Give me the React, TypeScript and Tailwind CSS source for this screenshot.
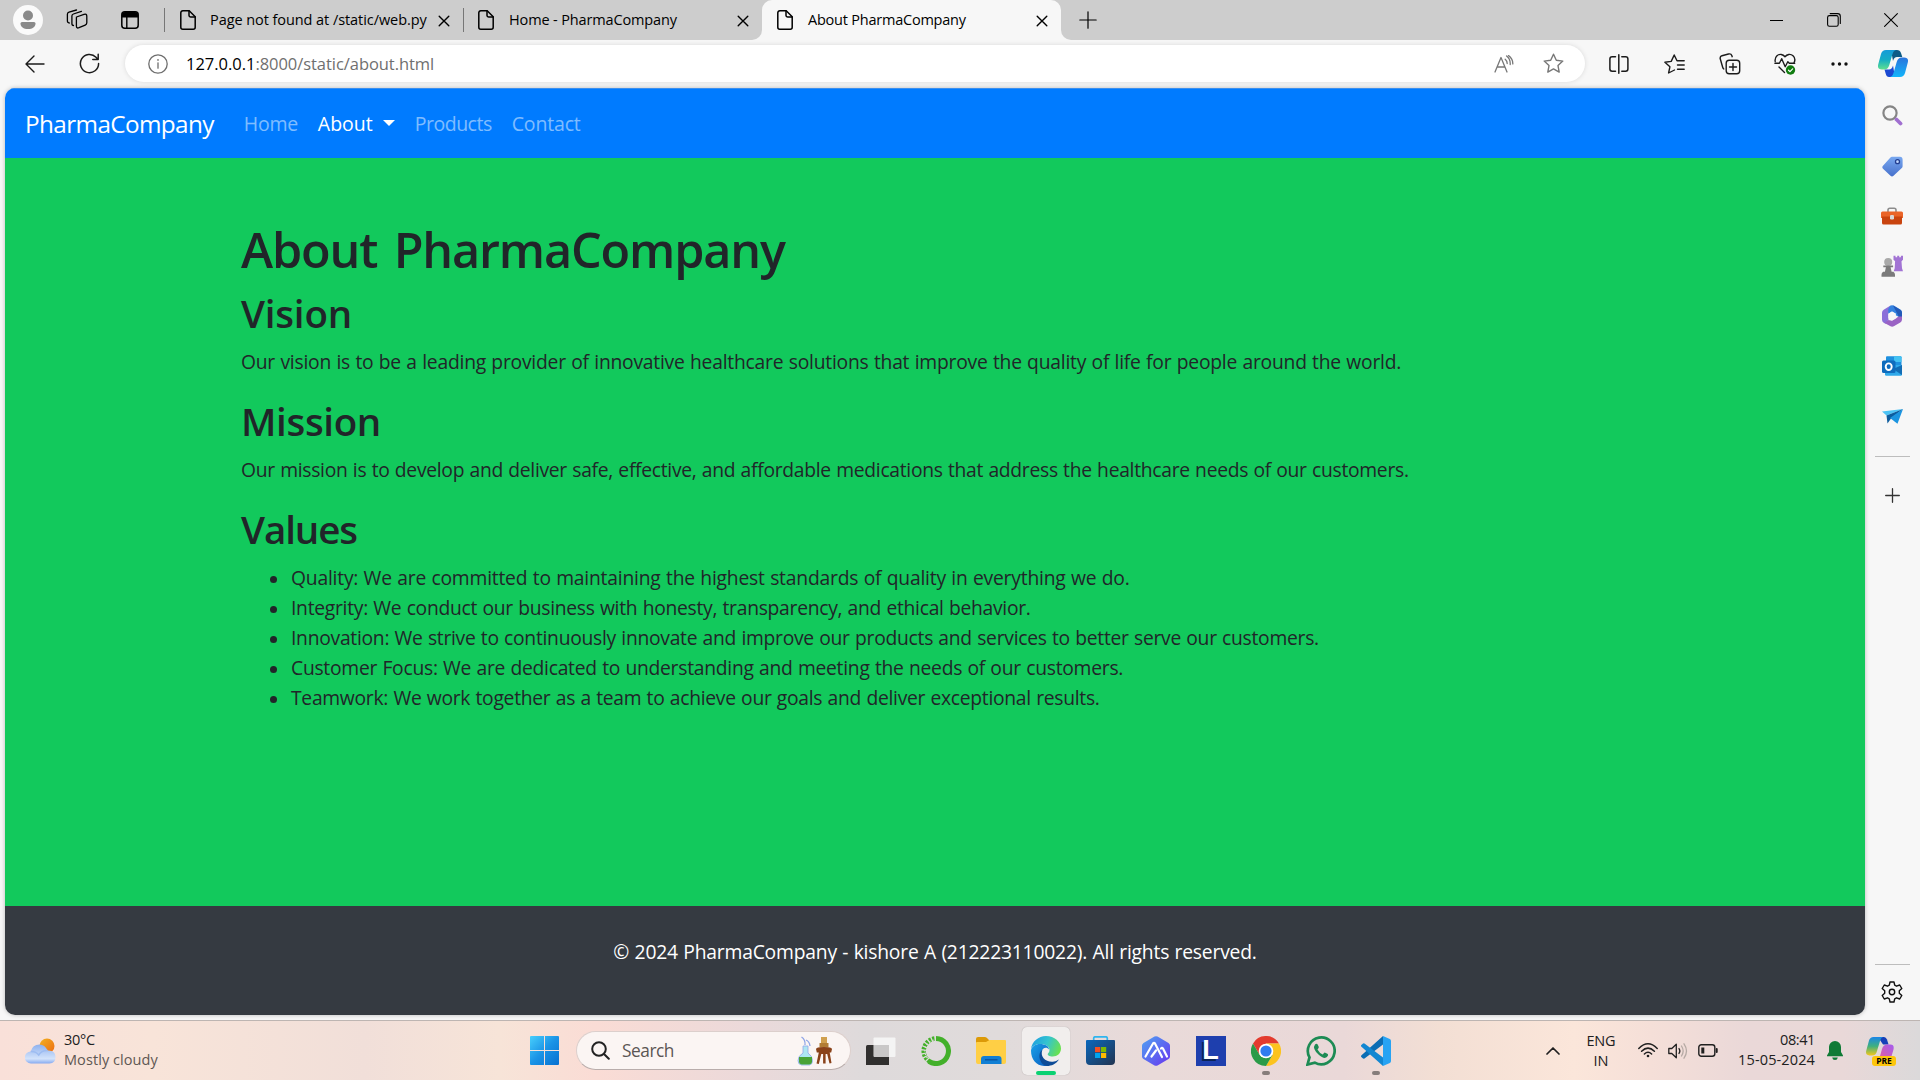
import { useLayoutEffect, useRef, useState } from "react";
import type { ReactNode } from "react";

/** Single line of text whose tracking is adjusted so that it spans `w` pixels. */
function Fit({ w, className = "", children }: { w: number; className?: string; children: string }) {
  const ref = useRef<HTMLSpanElement>(null);
  const [spacing, setSpacing] = useState(0.01);
  useLayoutEffect(() => {
    const el = ref.current;
    if (!el) return;
    const previous = el.style.letterSpacing;
    el.style.letterSpacing = "0.01px";
    const natural = el.getBoundingClientRect().width;
    el.style.letterSpacing = previous;
    setSpacing((w - natural) / children.length);
  }, [w, children]);
  return (
    <span ref={ref} className={`inline-block w-max shrink-0 whitespace-nowrap ${className}`} style={{ letterSpacing: `${spacing}px` }}>
      {children}
    </span>
  );
}

function Slot({ className, children }: { className: string; children?: ReactNode }) {
  return <div className={`flex shrink-0 items-center justify-center ${className}`}>{children}</div>;
}

const line = { fill: "none", stroke: "currentColor", strokeLinecap: "round", strokeLinejoin: "round" } as const;

function FileIcon() {
  return (
    <svg width="16" height="20" viewBox="0 0 16 20" {...line} strokeWidth="1.5">
      <path d="M2.8.8h6.4l6 6v10.400a2 2 0 0 1-2 2H2.800a2 2 0 0 1-2-2V2.800a2 2 0 0 1 2-2z" />
      <path d="M9 .9v4.300a1.800 1.800 0 0 0 1.800 1.800h4.300" />
    </svg>
  );
}

function CloseIcon() {
  return (
    <svg width="12" height="12" viewBox="0 0 12 12" {...line} strokeWidth="1.400">
      <path d="M1.200 1.200l9.600 9.600M10.800 1.200l-9.600 9.600" />
    </svg>
  );
}

function TabStrip() {
  return (
    <header className="flex h-10 items-center bg-[#cdcdcd] text-black">
      <Slot className="w-14">
        <svg width="30" height="30" viewBox="0 0 30 30">
          <circle cx="15" cy="15" r="15" fill="#fafafa" />
          <circle cx="15" cy="10.500" r="5" fill="#8a8a8a" />
          <path d="M7.500 18.500q0-1.500 1.500-1.500h12q1.500 0 1.500 1.500c0 3.500-3 5.500-7.500 5.500s-7.500-2-7.500-5.500z" fill="#8a8a8a" />
        </svg>
      </Slot>
      <Slot className="w-[42px]">
        <svg width="22" height="22" viewBox="0 0 22 22" {...line} strokeWidth="1.300">
          <path d="M10.500 8l7.500-2.600q2.800-.9 2.800 1.800v6.600q0 1.600-1.600 2.300l-6.200 2.600q-2.600 1-2.600-1.600V9.400q0-1 .1-1.400z" />
          <path d="M7.500 16.500q-1.600 0-1.600-2V7q0-1.500 1.500-2l8-2.700" />
          <path d="M3.300 14q-1.900 0-1.900-2.200V5.300q0-1.700 1.600-2.200L10.500 1" />
        </svg>
      </Slot>
      <Slot className="w-[63px]">
        <svg width="18" height="18" viewBox="0 0 18 18">
          <rect x=".8" y=".8" width="16.400" height="16.400" rx="3" fill="none" stroke="#000" strokeWidth="1.500" />
          <path d="M1 6.500V4q0-3 3-3h10q3 0 3 3v2.500z" />
          <path d="M5.800 6v11" stroke="#000" strokeWidth="1.400" />
        </svg>
      </Slot>
      <div className="ml-[3px] flex h-10 w-[299px] items-center">
        <div className="h-6 w-px bg-[#777]" />
        <div className="ml-[15px] flex">
          <FileIcon />
        </div>
        <div className="ml-[14px] w-[217px] text-[14.500px]">
          <Fit w={217}>Page not found at /static/web.py</Fit>
        </div>
        <div className="ml-[11px] pt-px">
          <CloseIcon />
        </div>
      </div>
      <div className="flex h-10 w-[299px] items-center">
        <div className="h-6 w-px bg-[#777]" />
        <div className="ml-[14px] flex">
          <FileIcon />
        </div>
        <div className="ml-[15px] w-[228px] text-[14.500px]">
          <Fit w={168}>Home - PharmaCompany</Fit>
        </div>
        <div className="pt-px">
          <CloseIcon />
        </div>
      </div>
      <div className="-ml-[10px] flex h-10 w-[319px]">
        <div className="w-[10px] bg-[#f7f7f7]">
          <div className="h-10 rounded-br-[10px] bg-[#cdcdcd]" />
        </div>
        <div className="flex w-[299px] items-center rounded-t-[10px] bg-[#f7f7f7]">
          <div className="ml-[15px] flex">
            <FileIcon />
          </div>
          <div className="ml-[15px] w-[228px] text-[14.500px]">
            <Fit w={158}>About PharmaCompany</Fit>
          </div>
          <div className="pt-px">
            <CloseIcon />
          </div>
        </div>
        <div className="w-[10px] bg-[#f7f7f7]">
          <div className="h-10 rounded-bl-[10px] bg-[#cdcdcd]" />
        </div>
      </div>
      <Slot className="w-[34px]">
        <svg width="18" height="18" viewBox="0 0 18 18" {...line} strokeWidth="1.200">
          <path d="M9 .8v16.400M.8 9h16.400" />
        </svg>
      </Slot>
      <div className="ml-auto flex">
        <Slot className="w-[58px]">
          <svg width="13" height="13" viewBox="0 0 13 13">
            <path d="M0 6.500h13" stroke="#000" />
          </svg>
        </Slot>
        <Slot className="w-[57px]">
          <svg width="14" height="14" viewBox="0 0 14 14" {...line} strokeWidth="1.100">
            <rect x=".6" y="2.600" width="10.600" height="10.600" rx="1.800" />
            <path d="M3.200.6h7.400q2.700 0 2.700 2.700v7.200" />
          </svg>
        </Slot>
        <Slot className="w-[58px]">
          <svg width="14" height="14" viewBox="0 0 14 14" {...line} strokeWidth="1.100">
            <path d="M.6.6l12.800 12.800M13.400.6L.6 13.400" />
          </svg>
        </Slot>
      </div>
    </header>
  );
}

function CopilotIcon() {
  return (
    <svg width="30" height="27" viewBox="0 0 30 27">
      <defs>
        <linearGradient id="cpA" x1="0" y1="0" x2="0" y2="1">
          <stop offset="0" stopColor="#159bd8" />
          <stop offset=".5" stopColor="#15adc5" />
          <stop offset="1" stopColor="#5fe08f" />
        </linearGradient>
        <linearGradient id="cpB" x1="0" y1="0" x2="0" y2="1">
          <stop offset="0" stopColor="#2a74dc" />
          <stop offset="1" stopColor="#12b5fb" />
        </linearGradient>
      </defs>
      <path d="M13 0h6q3 0 4 3l1.300 4h-5.300q-3 0-4 4z" fill="#0d5b86" />
      <path d="M17 27h-6q-2.500 0-3.200-3L6.500 19.500H11q3 0 4-4z" fill="#1b49d2" />
      <path d="M8 0h10q-2.500.5-3.500 4l-3.200 11q-1.300 4.500-5 4.500H4q-5 0-3.800-5L3 4q1.200-4 5-4z" fill="url(#cpA)" />
      <path d="M22 27H12q2.500-.5 3.500-4l3.200-11q1.300-4.500 5-4.500H26q5 0 3.800 5L27 23q-1.200 4-5 4z" fill="url(#cpB)" />
    </svg>
  );
}

const star = "M10.500 1.200l2.800 6 6.500.9-4.800 4.500 1.200 6.500-5.700-3.200-5.700 3.200L6 12.600 1.200 8.100l6.500-.9z";

function Toolbar() {
  return (
    <div className="flex h-12 items-center bg-[#f7f7f7] pb-px text-[#1b1b1b]">
      <Slot className="w-[62px] pl-2">
        <svg width="20" height="18" viewBox="0 0 20 18" {...line} strokeWidth="1.400">
          <path d="M19 9H1.200M9 1L1 9l8 8" />
        </svg>
      </Slot>
      <Slot className="w-[55px]">
        <svg width="21" height="21" viewBox="0 0 21 21" {...line} strokeWidth="1.500">
          <path d="M19.600 10.500A9.100 9.100 0 1 1 17 4.200l1.800 2.200M19.200 1.200v5.400h-5.400" />
        </svg>
      </Slot>
      <div className="ml-2 flex h-[37px] w-[1460px] items-center rounded-full bg-white shadow-[0_0_5px_rgba(0,0,0,0.12)]">
        <Slot className="w-[61px] pl-1 text-[#6e6e6e]">
          <svg width="20" height="20" viewBox="0 0 20 20" {...line} strokeWidth="1.300">
            <circle cx="10" cy="10" r="9.200" />
            <path d="M10 8.800v5.400" />
            <path d="M10 5.900v.1" strokeWidth="1.700" />
          </svg>
        </Slot>
        <div className="flex w-[1293px] text-[16.500px] leading-6">
          <Fit w={69.500} className="text-black">127.0.0.1</Fit>
          <Fit w={179} className="text-[#6f6f6f]">:8000/static/about.html</Fit>
        </div>
        <Slot className="w-[50px] text-[#777]">
          <svg width="20" height="18" viewBox="0 0 20 18" {...line} strokeWidth="1.300">
            <path d="M1 17L7 2.500 13 17M3.200 12h7.700M11.200 4.200q2 1.600 2 4.300M12.600 1q4 3 3.600 8.500M14.500.6q4.500 3.500 4.300 8.300" />
          </svg>
        </Slot>
        <Slot className="w-[48px] text-[#777]">
          <svg width="21" height="21" viewBox="0 0 21 21" {...line} strokeWidth="1.400">
            <path d={star} />
          </svg>
        </Slot>
      </div>
      <Slot className="ml-[6px] w-[56px]">
        <svg width="20" height="20" viewBox="0 0 20 20" {...line} strokeWidth="1.500">
          <path d="M6.500 2.800H3.200Q.9 2.800.9 5v10q0 2.200 2.300 2.200h3.300M12.800 2.800h3.800q2.300 0 2.300 2.200v10q0 2.200-2.300 2.200h-3.800M9.800.8v18.400" />
        </svg>
      </Slot>
      <Slot className="w-[55px]">
        <svg width="21" height="20" viewBox="0 0 21 20" {...line} strokeWidth="1.400">
          <path d="M10.500 16l-5.900 3 1.300-6.200L.9 8.200l6.300-.8 3-6.400 2.800 5.800h7.200M13.500 11h6.700M13.500 15.200h6.700" />
        </svg>
      </Slot>
      <Slot className="w-[55px]">
        <svg width="22" height="22" viewBox="0 0 22 22" {...line} strokeWidth="1.400">
          <rect x="7.200" y="7.200" width="13.500" height="13.500" rx="3" />
          <path d="M14 10.500v7M10.500 14h7M4.800 16Q4 15.500 3.600 14L1.300 6Q.6 3.500 3 2.700L9.500 1q2.600-.6 3.400 1.700l.3 1" />
        </svg>
      </Slot>
      <Slot className="w-[55px]">
        <svg width="22" height="22" viewBox="0 0 22 22" {...line} strokeWidth="1.400">
          <path d="M1.200 8.500Q.6 5 3 2.800c2.500-2.300 6-1.600 8 1 2-2.600 5.500-3.300 8-1 2.200 2 2.200 4.700 1 7M.9 10.200h4.500l2.300-4.500 3.500 8 2.600-5 1.500 1.500h5.400M5 14l5.500 5.500" />
          <circle cx="16.500" cy="17" r="4.700" fill="#107c10" stroke="none" />
          <path d="M14.500 17.200l1.500 1.400 2.600-2.800" stroke="#fff" strokeWidth="1.200" />
        </svg>
      </Slot>
      <Slot className="w-[55px]">
        <svg width="17" height="4" viewBox="0 0 17 4" fill="#111">
          <circle cx="2" cy="2" r="1.700" />
          <circle cx="8.500" cy="2" r="1.700" />
          <circle cx="15" cy="2" r="1.700" />
        </svg>
      </Slot>
      <Slot className="w-[52px]">
        <CopilotIcon />
      </Slot>
    </div>
  );
}

function SiteNav() {
  return (
    <nav className="flex h-[70px] items-center border-t border-[#3b8fee] bg-[#007bff] pt-px pl-5 text-[19.500px] leading-[30px] text-white/50">
      <Fit w={189} className="text-[24.300px] text-white">PharmaCompany</Fit>
      <Fit w={54} className="ml-[30px]">Home</Fit>
      <Fit w={55} className="ml-5 text-white">About</Fit>
      <div className="mt-[-2px] ml-[10px] border-x-[6px] border-t-[6px] border-x-transparent border-t-white" />
      <Fit w={77} className="ml-5">Products</Fit>
      <Fit w={69} className="ml-5">Contact</Fit>
    </nav>
  );
}

const values: [string, number][] = [
  ["Quality: We are committed to maintaining the highest standards of quality in everything we do.", 839.500],
  ["Integrity: We conduct our business with honesty, transparency, and ethical behavior.", 740.500],
  ["Innovation: We strive to continuously innovate and improve our products and services to better serve our customers.", 1029],
  ["Customer Focus: We are dedicated to understanding and meeting the needs of our customers.", 833],
  ["Teamwork: We work together as a team to achieve our goals and deliver exceptional results.", 809.500],
];

function Heading({ w, children }: { w: number; children: string }) {
  return (
    <h2 className="mb-[10px] flex h-12 pt-px text-[38.500px] leading-[48px] font-semibold">
      <Fit w={w}>{children}</Fit>
    </h2>
  );
}

function SitePage() {
  return (
    <main className="flex h-[927px] w-[1860px] shrink-0 flex-col overflow-hidden rounded-[10px] shadow-[0_0_4px_rgba(0,0,0,0.25)]">
      <SiteNav />
      <section className="h-[748px] bg-[#12c95c] pt-[60px] pl-[236px] text-[19.300px] leading-[30px] text-[#212529] [word-spacing:0.600px]">
        <h1 className="mb-[10px] flex h-[60px] pt-px text-[48.500px] leading-[60px] font-semibold [word-spacing:5px]">
          <Fit w={544}>About PharmaCompany</Fit>
        </h1>
        <Heading w={111}>Vision</Heading>
        <p className="mb-5 flex h-[30px] pt-px">
          <Fit w={1161.500}>Our vision is to be a leading provider of innovative healthcare solutions that improve the quality of life for people around the world.</Fit>
        </p>
        <Heading w={140}>Mission</Heading>
        <p className="mb-5 flex h-[30px] pt-px">
          <Fit w={1169}>Our mission is to develop and deliver safe, effective, and affordable medications that address the healthcare needs of our customers.</Fit>
        </p>
        <Heading w={116}>Values</Heading>
        <ul className="pt-px pl-[29px]">
          {values.map(([text, w]) => (
            <li key={text} className="flex h-[30px] items-center">
              <span className="mt-0.5 mr-[14px] size-[7px] rounded-full bg-[#212529]" />
              <Fit w={w}>{text}</Fit>
            </li>
          ))}
        </ul>
      </section>
      <footer className="flex h-[109px] justify-center bg-[#353a41] pt-[31px] text-[19.300px] leading-[30px] text-white [word-spacing:0.600px]">
        <Fit w={644}>© 2024 PharmaCompany - kishore A (212223110022). All rights reserved.</Fit>
      </footer>
    </main>
  );
}

function Sidebar() {
  return (
    <aside className="flex w-[55px] flex-col items-center pr-px">
      <Slot className="mt-[2px] h-[50px]">
        <svg width="21" height="21" viewBox="0 0 21 21" fill="none">
          <circle cx="8" cy="8" r="6.600" stroke="#858585" strokeWidth="2.200" />
          <path d="M14.500 14.500l4 4" stroke="#a06fd0" strokeWidth="3.800" strokeLinecap="round" />
        </svg>
      </Slot>
      <Slot className="h-[51px] pt-px">
        <svg width="21" height="21" viewBox="0 0 21 21">
          <defs>
            <linearGradient id="tag" x1="0" y1="0" x2="0" y2="1">
              <stop offset="0" stopColor="#79a8f0" />
              <stop offset="1" stopColor="#4771cc" />
            </linearGradient>
          </defs>
          <path d="M10 .8h8q2.600.2 2.600 3v6.500q0 1-.8 1.800l-8.300 7.700q-1.500 1.200-3 0L1 12.800q-1.400-1.500 0-3l7.200-8Q9 .8 10 .8z" fill="url(#tag)" />
          <circle cx="15.500" cy="5.700" r="2" fill="#bfd7ff" stroke="#243f91" strokeWidth="1.300" />
        </svg>
      </Slot>
      <Slot className="h-[49px] pt-px">
        <svg width="22" height="18" viewBox="0 0 22 18">
          <path d="M7 5V3q0-1.800 1.800-1.800h4.400Q15 1.200 15 3v2" fill="none" stroke="#8c8c8c" strokeWidth="1.600" />
          <path d="M0 6q0-1.500 1.500-1.500h19Q22 4.500 22 6v5H0z" fill="#ea6428" />
          <path d="M1 9.500h20V16q0 1.500-1.500 1.500h-17Q1 17.500 1 16z" fill="#c9440f" />
          <rect x="9" y="8" width="4" height="4.500" rx="1.200" fill="#d8d8d8" />
        </svg>
      </Slot>
      <Slot className="h-[51px] pt-[2px]">
        <svg width="22" height="23" viewBox="0 0 22 23">
          <path d="M12.500.7h2v1.500h1.700V.7h2v1.500h1.700V.7H22v4l-1.500 1.500.5 7 1 3H12.700l1-3 .4-7-1.600-1.500z" fill="#a274d4" />
          <circle cx="7.200" cy="7" r="4" fill="#a9a9a9" />
          <path d="M2.300 10.500h9.800v1.800H9.600l1 4.500h1.700q1.700 1.200 1.700 3v2H.5v-2q0-2 1.700-3h1.700l1-4.500H2.300z" fill="#7b7b7b" />
        </svg>
      </Slot>
      <Slot className="h-[50px]">
        <svg width="20" height="22" viewBox="0 0 20 22">
          <path d="M8.500.6L1.700 4.700Q0 5.700 0 7.700v7q0 2 1.700 3l2 1.100 2.800-4V8.500z" fill="#8a6fd9" />
          <path d="M8.500.6q1.600-.9 3.300 0l6.500 4Q20 5.700 20 7.700v6l-6.300-3.500V8.500L10 6.500 6.300 8.700V4z" fill="#3582df" />
          <path d="M11 .4l7.300 4.300Q20 5.700 20 7.700v6l-3-1.700z" fill="#2259b8" />
          <path d="M20 11.500v3q0 2-1.700 3l-6.500 3.800q-1.700.9-3.300 0L2.500 18l4-3 3.500.7 3.500-2 3-2.200z" fill="#9a63c4" />
          <path d="M10 6.500l3.700 2.200v4.500L10 15.400l-3.700-2.200V8.700z" fill="#f7f7f7" />
        </svg>
      </Slot>
      <Slot className="h-[50px]">
        <svg width="20" height="20" viewBox="0 0 20 20">
          <rect x="4" y=".3" width="15.500" height="11" rx="1" fill="#1e90df" />
          <path d="M12 .3h6.500q1 0 1 1V6H12z" fill="#43c2f2" />
          <path d="M3 9h17v9.500q0 1.200-1.200 1.200H4.200Q3 19.700 3 18.500z" fill="#2fa9ea" />
          <path d="M20 9v10l-9-6z" fill="#126db5" />
          <rect x="0" y="4.500" width="13.500" height="12.500" rx="1.500" fill="#0f6cbd" />
          <ellipse cx="6.700" cy="10.700" rx="3" ry="3.300" fill="none" stroke="#fff" strokeWidth="1.900" />
        </svg>
      </Slot>
      <Slot className="h-[50px]">
        <svg width="21" height="15" viewBox="0 0 21 15">
          <path d="M21 0L0 2.500l4.500 4z" fill="#4cc3f5" />
          <path d="M21 0L4.500 6.500l1 8L9 9.500z" fill="#0c5c9e" />
          <path d="M21 0L8 9l7.500 5.700z" fill="#1b94e0" />
        </svg>
      </Slot>
      <div className="mt-[15px] h-px w-[35px] bg-[#bdbdbd]" />
      <Slot className="h-[77px] text-[#333]">
        <svg width="15" height="15" viewBox="0 0 15 15" {...line} strokeWidth="1.300">
          <path d="M7.500.7v13.600M.7 7.500h13.600" />
        </svg>
      </Slot>
      <div className="mt-auto h-px w-[35px] bg-[#bdbdbd]" />
      <Slot className="h-[55px] pb-px text-[#111]">
        <svg width="22" height="22" viewBox="0 0 22 22" {...line} strokeWidth="1.400">
          <path d="M9 1h4l.7 3.200 1.800 1L18.700 4l2.100 3.500-2.500 2.300v2.400l2.500 2.300-2.100 3.500-3.200-1.200-1.800 1L13 21H9l-.7-3.200-1.800-1L3.300 18l-2.100-3.500 2.500-2.300V9.800L1.200 7.500 3.300 4l3.200 1.200 1.800-1z" />
          <circle cx="11" cy="11" r="2.700" />
        </svg>
      </Slot>
    </aside>
  );
}

function WeatherIcon() {
  return (
    <svg width="31" height="26" viewBox="0 0 31 26">
      <defs>
        <linearGradient id="sun" x1="0" y1="0" x2="1" y2="1">
          <stop offset="0" stopColor="#f3b21f" />
          <stop offset="1" stopColor="#ec6a12" />
        </linearGradient>
        <linearGradient id="cloud" x1="0" y1="0" x2="0" y2="1">
          <stop offset="0" stopColor="#8eb1ee" />
          <stop offset=".75" stopColor="#d3e3fb" />
          <stop offset="1" stopColor="#86aaf0" />
        </linearGradient>
      </defs>
      <circle cx="22" cy="8" r="7.500" fill="url(#sun)" />
      <path d="M6 25.500a6 6 0 0 1-.3-12Q7.500 6.500 14.500 6.500q5.500 0 8 6 8-.5 8 6.500 0 6-6 6.500z" fill="url(#cloud)" />
      <path d="M5.700 13.500q5-.5 8 3.500 3-5 9-4.500" fill="none" stroke="#9dbcf1" strokeWidth="1.500" />
    </svg>
  );
}

function SearchArt() {
  return (
    <svg width="35" height="30" viewBox="0 0 35 30">
      <path d="M4.500 1q4 2.500 3.500 8M9 4q3.500 1.500 4 6" fill="none" stroke="#8ea4e6" strokeWidth="1.300" />
      <path d="M6 10h5v7q4.500 3 4.500 7.500 0 4-3 4.500h-8Q1 28.500 1 24.500 1 20 6 17z" fill="#aee6f2" stroke="#93a7e8" strokeWidth=".8" />
      <path d="M2 21h13v5q0 2-2.500 2.400h-8Q2 28 2 26z" fill="#4aa336" />
      <path d="M24 1h6v10h-6z" fill="#d0a04f" />
      <path d="M22.500 7h9v4.500h-9z" fill="#b27d35" />
      <path d="M19 13q0-2 8-2t8 2l-.8 3.500h-1.500L34.500 27l-2 .5-2.300-9.500h-1.600v9.500h-2.500V18h-1.800l-2.500 10-2.300-.5 2.300-11h-2z" fill="#8a4219" />
    </svg>
  );
}

function EdgeIcon() {
  return (
    <svg width="30" height="30" viewBox="0 0 30 30">
      <defs>
        <linearGradient id="edT" x1="0" y1=".3" x2="1" y2=".6">
          <stop offset="0" stopColor="#1e9fe0" />
          <stop offset=".5" stopColor="#34c4cf" />
          <stop offset="1" stopColor="#6be24c" />
        </linearGradient>
        <linearGradient id="edL" x1="0" y1="0" x2="1" y2="1">
          <stop offset="0" stopColor="#1aa1e8" />
          <stop offset="1" stopColor="#0a5cc0" />
        </linearGradient>
      </defs>
      <path d="M0 13C1 5.500 7.500 0 15 0c8.500 0 15 6 15 12.500 0 5-3.800 8-8.300 8-3.700 0-5-1.500-5-2.300 0-.8 1.800-1.400 1.800-4.200 0-3.500-4-6-8.500-6C5 8 1 10 0 13z" fill="url(#edT)" />
      <path d="M0 14.500C.5 10.500 4.500 8 9 8c5 0 9 2.200 9 5.500-2-3-6.500-2-7.500 2-1.200 5.500 2 12 7 14C7.500 32 0 25 0 14.500z" fill="url(#edL)" />
      <path d="M11.500 13.500c-3.500 7.500 4.500 13.500 11.500 12 2-.4 3.500-1.200 5-2C25 28 20.500 30 16 30 9 29 5.500 18 11.500 13.500z" fill="#0e4c97" />
    </svg>
  );
}

function Taskbar() {
  return (
    <div className="flex h-[60px] items-center border-t border-[#bdb5b2] bg-[linear-gradient(90deg,#f9e0d9_0%,#f8e4d9_8%,#f1dfd9_19%,#f7e4d8_26%,#fadcd5_31%,#ebd9da_39%,#dedadb_45%,#e0dbdb_52%,#e9dad9_60%,#ead8d8_70%,#f3dfd4_75%,#fbe6da_82%,#f5dfd8_86%,#ead8d8_91%,#e9d8d8_96%,#dbd9da_100%)] text-[#202020]">
      <div className="flex w-[517px] items-center pl-[25px]">
        <WeatherIcon />
        <div className="ml-2 flex flex-col pb-[2px] text-[14.500px] leading-5">
          <Fit w={31}>30°C</Fit>
          <Fit w={94} className="text-[#5f5753]">Mostly cloudy</Fit>
        </div>
      </div>
      <Slot className="w-[55px]">
        <svg width="29" height="29" viewBox="0 0 29 29">
          <defs>
            <linearGradient id="win" gradientUnits="userSpaceOnUse" x1="0" y1="0" x2="29" y2="29">
              <stop offset="0" stopColor="#48cffc" />
              <stop offset=".5" stopColor="#1a93e6" />
              <stop offset="1" stopColor="#0870d0" />
            </linearGradient>
          </defs>
          <path d="M1 0h13v14H0V1q0-1 1-1zM15 0h13q1 0 1 1v13H15zM0 15h14v14H1q-1 0-1-1zM15 15h14v13q0 1-1 1H15z" fill="url(#win)" />
        </svg>
      </Slot>
      <div className="ml-1 flex h-[39px] w-[275px] items-center rounded-full border border-[#dccfcc] border-b-[#b9adab] bg-[#fbf5f3]">
        <svg className="ml-[14px]" width="19" height="19" viewBox="0 0 19 19" fill="none" stroke="#222" strokeWidth="2" strokeLinecap="round">
          <circle cx="8" cy="8" r="6.800" />
          <path d="M13 13l4.800 4.800" />
        </svg>
        <div className="ml-3 w-[175px] pt-px text-[17.300px] leading-6 text-[#5b5654]">
          <Fit w={52}>Search</Fit>
        </div>
        <SearchArt />
      </div>
      <Slot className="ml-[2px] w-[55px]">
        <svg width="30" height="28" viewBox="0 0 30 28">
          <path d="M0 9.500q0-1.500 1.500-1.500h20q1.500 0 1.500 1.500V28H0z" fill="#31302f" />
          <rect x="7.500" y=".5" width="22" height="19.500" rx="1" fill="#f8f8f8" fillOpacity=".85" />
          <path d="M8 8h15v12H8z" fill="#c9c8c8" />
        </svg>
      </Slot>
      <Slot className="w-[55px]">
        <svg width="30" height="30" viewBox="0 0 30 30" fill="none" stroke="#43b02a">
          <path d="M15 2.500A12.500 12.500 0 1 1 8 25.400" strokeWidth="5" />
          <path d="M8.500 25.500A12.500 12.500 0 0 1 14 2.500" strokeWidth="4.500" strokeDasharray="2.200 1.300" />
          <path d="M6.500 22A11 11 0 0 1 13 4" strokeWidth="1.200" stroke="#dedada" strokeDasharray="1.500 2" />
        </svg>
      </Slot>
      <Slot className="w-[55px]">
        <svg width="30" height="27" viewBox="0 0 30 27">
          <path d="M0 2q0-2 2-2h7q1.500 0 2.500 1.500L13 3v6H0z" fill="#dc9a08" />
          <path d="M0 6q0-1 1-1h9l3.500-2H29q1 0 1 1v21q0 2-2 2H2q-2 0-2-2z" fill="#ffcf45" />
          <path d="M5 27v-5q0-3 3-3h14.500q3 0 3 3v5z" fill="#117fd4" />
          <path d="M9 22.800h12.500" stroke="#0a529c" strokeWidth="1.300" />
        </svg>
      </Slot>
      <Slot className="w-[55px]">
        <div className="flex h-12 w-12 flex-col items-center rounded-[5px] bg-[#f1eeed] pt-[9px] shadow-[0_0_1px_rgba(0,0,0,0.3)]">
          <EdgeIcon />
          <div className="mt-[5px] h-1 w-5 rounded-full bg-[#0bd172]" />
        </div>
      </Slot>
      <Slot className="w-[55px]">
        <svg width="29" height="29" viewBox="0 0 29 29">
          <defs>
            <linearGradient id="store" x1="0" y1="0" x2="1" y2="1">
              <stop offset="0" stopColor="#0a68bd" />
              <stop offset="1" stopColor="#223450" />
            </linearGradient>
          </defs>
          <path d="M7.700 6V2.200q0-1.400 1.400-1.400h10.800q1.400 0 1.400 1.400V6" fill="none" stroke="#2fb5ee" strokeWidth="1.700" />
          <path d="M0 5q0-1 1-1h27q1 0 1 1v20q0 4-4 4H4q-4 0-4-4z" fill="url(#store)" />
          <path d="M9 11h5.200v5.200H9z" fill="#f25022" />
          <path d="M15 11h5.200v5.200H15z" fill="#7fba00" />
          <path d="M9 17h5.200v5H9z" fill="#00a4ef" />
          <path d="M15 17h5.200v5H15z" fill="#ffb900" />
        </svg>
      </Slot>
      <Slot className="w-[55px]">
        <svg width="28" height="30" viewBox="0 0 28 30">
          <defs>
            <linearGradient id="hex" x1="0" y1="0" x2="1" y2="1">
              <stop offset="0" stopColor="#4ea3f2" />
              <stop offset="1" stopColor="#6a35ef" />
            </linearGradient>
          </defs>
          <path d="M12.500.6q1.500-.8 3 0L26.500 7Q28 8 28 9.500v11q0 1.500-1.500 2.500l-11 6.400q-1.500.8-3 0L1.500 23Q0 22 0 20.500v-11Q0 8 1.500 7z" fill="url(#hex)" />
          <path d="M3.500 20.500L11 7.500q1-1.300 2 0l7 13.500M9.500 20.500l4.500-6M19 12.500q1-1.500 2 0l4 8" fill="none" stroke="#fff" strokeWidth="2.200" strokeLinecap="round" />
        </svg>
      </Slot>
      <Slot className="w-[55px]">
        <div className="flex size-[30px] items-center justify-center bg-[#1e3fae] font-['Liberation_Sans'] text-[27px] leading-none font-bold text-white [text-shadow:-2px_2px_0_#0a2358]">L</div>
      </Slot>
      <Slot className="w-[55px]">
        <div className="flex h-12 flex-col items-center pt-[9px]">
          <svg width="30" height="30" viewBox="0 0 30 30">
            <path d="M2 7.500A15 15 0 0 1 28 7.500H15L8.500 18.700z" fill="#e33b2e" />
            <path d="M28 7.500A15 15 0 0 1 15 30l6.500-11.200Q23.500 12 15 7.500z" fill="#fcc31e" />
            <path d="M2 7.500l6.500 11.300Q12 24 21.500 18.800L15 30A15 15 0 0 1 2 7.500z" fill="#2a9b48" />
            <circle cx="15" cy="15" r="7.300" fill="#fff" />
            <circle cx="15" cy="15" r="5.600" fill="#2f7cf0" />
          </svg>
          <div className="mt-[5px] h-1 w-2 rounded-full bg-[#867d7b]" />
        </div>
      </Slot>
      <Slot className="w-[55px]">
        <svg width="30" height="30" viewBox="0 0 30 30">
          <path d="M1.500 28.500l2-7.200A13.400 13.400 0 1 1 8.800 26.600z" fill="none" stroke="#1d8b54" strokeWidth="2.700" />
          <path d="M9 8.500q1.800-1.700 2.800.3l1 2.300q.2.800-1.300 2.300 1.800 3.500 5.300 5 1.400-1.800 2-1.800l3 1.500q1 1-.8 3Q18 23.500 12.500 18.500 6 12.500 9 8.500z" fill="#1d8b54" />
        </svg>
      </Slot>
      <Slot className="w-[55px]">
        <div className="flex h-12 flex-col items-center pt-[9px]">
          <svg width="30" height="30" viewBox="0 0 30 30">
            <path d="M22 0v8.500L3.500 22.500q-1 .6-1.800-.2L.3 21q-.7-1 .2-1.800z" fill="#0b6db4" />
            <path d="M22 30v-8.500L3.500 7.500q-1-.6-1.800.2L.3 9q-.7 1 .2 1.800z" fill="#1287d2" />
            <path d="M22 0l6.800 3Q30 3.600 30 5v20q0 1.400-1.200 2L22 30z" fill="#27a3f3" />
          </svg>
          <div className="mt-[5px] h-1 w-2 rounded-full bg-[#867d7b]" />
        </div>
      </Slot>
      <Slot className="ml-[135px] w-[30px]">
        <svg width="14" height="8" viewBox="0 0 14 8" {...line} strokeWidth="1.700">
          <path d="M1 7l6-6 6 6" />
        </svg>
      </Slot>
      <div className="ml-[14px] flex w-[38px] flex-col items-center text-[14.500px] leading-5">
        <Fit w={29}>ENG</Fit>
        <Fit w={15}>IN</Fit>
      </div>
      <Slot className="ml-[13px] w-[30px]">
        <svg width="20" height="15" viewBox="0 0 20 15" {...line} strokeWidth="1.500">
          <path d="M.8 5.500q9.200-9.400 18.400 0M3.600 8.300q6.400-6.300 12.800 0M6.400 11q3.600-3.400 7.200 0" />
          <circle cx="10" cy="13" r="1.300" fill="currentColor" stroke="none" />
        </svg>
      </Slot>
      <Slot className="w-[30px]">
        <svg width="20" height="16" viewBox="0 0 20 16" {...line} strokeWidth="1.300">
          <path d="M.8 5.500h3L8.300 1.200v13.600L3.800 10.500h-3zM11 5.500q1.700 2.500 0 5" />
          <path d="M13.500 3q3.300 5 0 10M16 .8q5 7.200 0 14.400" stroke="#b5a9a4" />
        </svg>
      </Slot>
      <Slot className="w-[30px]">
        <svg width="20" height="13" viewBox="0 0 20 13" {...line} strokeWidth="1.400">
          <rect x=".8" y=".8" width="16" height="11.400" rx="2.500" />
          <path d="M3.300 3.500h3v6h-3z" fill="currentColor" stroke="none" />
          <path d="M18.700 5v3" strokeWidth="2" />
        </svg>
      </Slot>
      <div className="flex w-[92px] flex-col items-end pb-[2px] text-[14.500px] leading-5">
        <Fit w={35}>08:41</Fit>
        <Fit w={77}>15-05-2024</Fit>
      </div>
      <Slot className="w-[40px]">
        <svg width="16" height="19" viewBox="0 0 16 19" fill="#0f7a35">
          <path d="M8 0a6 6 0 0 1 6 6v5l2 3.500v.8H0v-.8L2 11V6a6 6 0 0 1 6-6zM5.200 16.500h5.600Q10.500 19 8 19t-2.800-2.500z" />
        </svg>
      </Slot>
      <div className="relative ml-[11px] h-[28px] w-[30px]">
        <svg width="28" height="25" viewBox="0 0 28 25">
          <defs>
            <linearGradient id="preA" x1="0" y1="0" x2="0" y2="1">
              <stop offset="0" stopColor="#1a86e8" />
              <stop offset=".5" stopColor="#3fb07e" />
              <stop offset="1" stopColor="#f4c81a" />
            </linearGradient>
            <linearGradient id="preB" x1="1" y1="0" x2="0" y2="1">
              <stop offset="0" stopColor="#a45cf0" />
              <stop offset="1" stopColor="#f0608a" />
            </linearGradient>
          </defs>
          <path d="M12 0h6q2 0 3 2.500l1.500 5H17z" fill="#1740b8" />
          <path d="M7.500 0H17q-2 .5-3 4l-3 10q-1 4.500-5 4.500H3.500Q-1 18 .3 13.500L3 3.500Q4 0 7.500 0z" fill="url(#preA)" />
          <path d="M20 25H10q2.500-.5 3.500-4l2.500-9q1.300-4.500 5-4.500h3.500q4 0 3 5L25 21q-1 4-5 4z" fill="url(#preB)" />
        </svg>
        <span className="absolute top-[19px] left-[6px] h-[10px] w-[24px] rounded-[3px] bg-[#fdc60c] text-center text-[8.500px] leading-[10px] font-bold text-black">PRE</span>
      </div>
    </div>
  );
}

export default function App() {
  return (
    <div className="flex h-[1080px] w-[1920px] flex-col overflow-hidden bg-[#f7f7f7] font-['Open_Sans','Noto_Sans',sans-serif]">
      <TabStrip />
      <Toolbar />
      <div className="flex h-[932px] pl-[5px]">
        <SitePage />
        <Sidebar />
      </div>
      <Taskbar />
    </div>
  );
}
